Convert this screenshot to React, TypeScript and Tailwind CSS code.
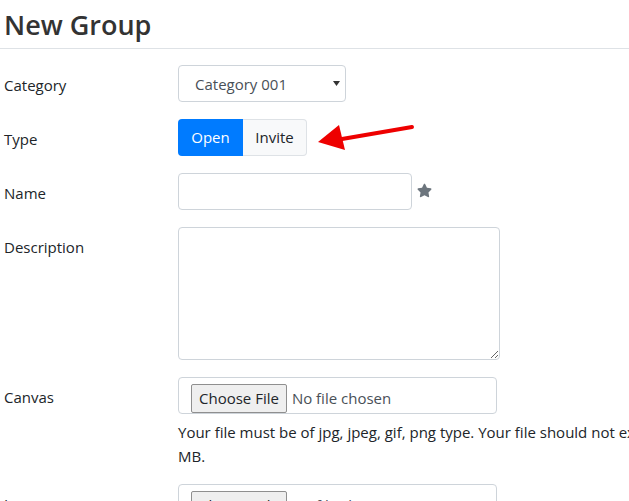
import React from 'react';
import { FaStar } from 'react-icons/fa';

const Label: React.FC<{ children: React.ReactNode }> = ({ children }) => (
  <label className="w-[178px] shrink-0 pl-1 pt-[8px] leading-6 text-[15px] text-[#212529]">{children}</label>
);

const FileField: React.FC = () => (
  <div className="flex h-[37px] w-[319px] items-end rounded border border-[#ced4da] bg-white pl-[12px]">
    <button type="button" className="h-[29px] rounded-[2px] border border-[#8f8f8f] bg-[#efefef] px-[7px] text-[15px] text-[#212529]">
      Choose File
    </button>
    <span className="pb-[4px] pl-[5px] text-[15px] text-[#495057]">No file chosen</span>
  </div>
);

export default function App() {
  return (
    <div className="relative h-[501px] w-[629px] overflow-hidden bg-white font-['Open_Sans',sans-serif] text-[#212529]">
      <h2 className="mx-0 mt-[5px] pl-1 text-[27px] font-semibold leading-[40px] text-[#333]">New Group</h2>
      <div className="mt-[3px] border-b border-[#dee2e6]" />

      <form className="mt-[16px] flex flex-col">
        <div className="mb-[17px] flex">
          <Label>Category</Label>
          <div className="relative">
            <select className="h-[37px] w-[168px] appearance-none rounded border border-[#ced4da] bg-white pl-[16px] pt-[2px] text-[15px] text-[#495057] outline-none">
              <option>Category 001</option>
            </select>
            <svg className="pointer-events-none absolute right-[6px] top-[16px]" width="7" height="5" viewBox="0 0 7 5">
              <path d="M0 0h7L3.5 5z" fill="#333" />
            </svg>
          </div>
        </div>

        <div className="mb-[17px] flex">
          <Label>Type</Label>
          <div className="flex h-[37px]">
            <button type="button" className="w-[65px] rounded-l bg-[#007bff] text-[15px] text-white">Open</button>
            <button type="button" className="w-[64px] rounded-r border border-l-0 border-[#dee2e6] bg-[#f8f9fa] text-[15px] text-[#212529]">Invite</button>
          </div>
        </div>

        <div className="mb-[17px] flex">
          <Label>Name</Label>
          <input className="h-[37px] w-[234px] rounded border border-[#ced4da] bg-white outline-none" />
          <FaStar className="ml-[5px] mt-[10px] text-[#6c757d]" size={15} />
        </div>

        <div className="mb-[17px] flex">
          <Label>Description</Label>
          <textarea className="h-[133px] w-[322px] rounded border border-[#ced4da] bg-white outline-none" />
        </div>

        <div className="mb-[16px] flex">
          <Label>Canvas</Label>
          <div className="flex flex-col">
            <FileField />
            <p className="mt-[6px] w-[520px] text-[15px] leading-6 text-[#212529]">
              Your file must be of jpg, jpeg, gif, png type. Your file should not exceed 2 MB.
            </p>
          </div>
        </div>

        <div className="flex">
          <Label>Logo</Label>
          <FileField />
        </div>
      </form>

      <svg className="absolute left-[316px] top-[122px]" width="100" height="32" viewBox="0 0 100 32">
        <path d="M96 5 L26 17" stroke="#ee0000" strokeWidth="4" strokeLinecap="round" />
        <path d="M2 20 L23 3 L29 28 Z" fill="#ee0000" />
      </svg>
    </div>
  );
}
